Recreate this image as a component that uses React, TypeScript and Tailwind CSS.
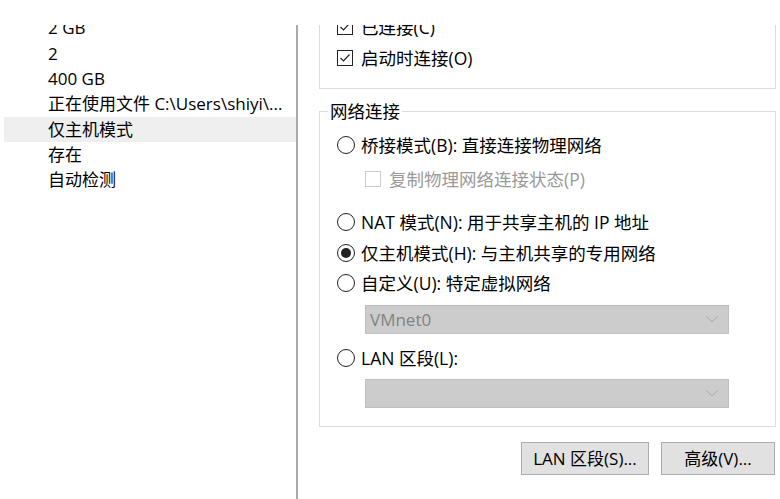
import React from "react"

const font = { fontFamily: '"Open Sans", "Noto Sans CJK SC", sans-serif' }

function Check({ checked, disabled }: { checked?: boolean; disabled?: boolean }) {
  return (
    <span
      className={`flex h-[16px] w-[16px] shrink-0 items-center justify-center border bg-white ${
        disabled ? "border-[#cccccc]" : "border-[#222222]"
      }`}
    >
      {checked && (
        <svg width="12" height="12" viewBox="0 0 12 12">
          <path d="M1.5 6 L4.5 9 L10.5 2.5" fill="none" stroke="#222" strokeWidth="1.2" />
        </svg>
      )}
    </span>
  )
}

function Radio({ checked }: { checked?: boolean }) {
  return (
    <span className="flex h-[18px] w-[18px] shrink-0 items-center justify-center rounded-full border border-[#222222] bg-white">
      {checked && <span className="h-[10px] w-[10px] rounded-full bg-[#222222]" />}
    </span>
  )
}

function Select({ value }: { value?: string }) {
  return (
    <div className="ml-[45px] mr-[46px] flex h-[29px] items-center justify-between border border-[#bfbfbf] bg-[#cccccc] pl-[4px] pr-[10px] text-[17px] text-[#838383]">
      <span>{value}</span>
      <svg width="12" height="7" viewBox="0 0 12 7">
        <path d="M0.5 0.5 L6 6 L11.5 0.5" fill="none" stroke="#a6a6a6" strokeWidth="1" />
      </svg>
    </div>
  )
}

const leftRows = ["2 GB", "2", "400 GB", "正在使用文件 C:\\Users\\shiyi\\...", "仅主机模式", "存在", "自动检测"]

export default function App() {
  return (
    <div className="h-[499px] w-[780px] bg-white pt-[25px] text-[17px] text-black" style={font}>
      <div className="flex h-full overflow-hidden">
        {/* left summary list */}
        <div className="w-[296px] shrink-0">
          <div className="-mt-[9.6px] pl-[4px]">
            {leftRows.map((r) => (
              <div
                key={r}
                className={`flex h-[25.3px] items-center whitespace-nowrap pl-[44px] ${
                  r === "仅主机模式" ? "bg-[#efefef]" : ""
                }`}
              >
                {r}
              </div>
            ))}
          </div>
        </div>

        <div className="w-[2px] shrink-0 bg-[#a9a9a9]" />

        {/* right settings */}
        <div className="flex-1 pl-[21px] pr-[4px] text-[17.5px]">
          <div className="-mt-[20px] border border-[#dcdcdc] pl-[17px] pt-[6px] pb-[15px]">
            <div className="flex h-[30px] items-center gap-[8px]">
              <Check checked />
              <span>已连接(C)</span>
            </div>
            <div className="mt-[1px] flex h-[30px] items-center gap-[8px]">
              <Check checked />
              <span>启动时连接(O)</span>
            </div>
          </div>

          <fieldset className="mt-[10px] border border-[#dcdcdc]">
            <legend className="ml-[8px] px-[2px] leading-[24px]">网络连接</legend>
            <div className="pt-[7px] pb-[18px]">
              <div className="flex h-[30px] items-center gap-[6px] pl-[17px]">
                <Radio />
                <span>桥接模式(B): 直接连接物理网络</span>
              </div>
              <div className="mt-[4px] flex h-[30px] items-center gap-[8px] pl-[45px] text-[#9a9a9a]">
                <Check disabled />
                <span>复制物理网络连接状态(P)</span>
              </div>
              <div className="mt-[13px] flex h-[30px] items-center gap-[6px] pl-[17px]">
                <Radio />
                <span>NAT 模式(N): 用于共享主机的 IP 地址</span>
              </div>
              <div className="mt-[1px] flex h-[30px] items-center gap-[6px] pl-[17px]">
                <Radio checked />
                <span>仅主机模式(H): 与主机共享的专用网络</span>
              </div>
              <div className="flex h-[30px] items-center gap-[6px] pl-[17px]">
                <Radio />
                <span>自定义(U): 特定虚拟网络</span>
              </div>
              <div className="mt-[7px]">
                <Select value="VMnet0" />
              </div>
              <div className="mt-[9px] flex h-[30px] items-center gap-[6px] pl-[17px]">
                <Radio />
                <span>LAN 区段(L):</span>
              </div>
              <div className="mt-[6px]">
                <Select />
              </div>
            </div>
          </fieldset>

          <div className="mt-[15px] flex justify-end gap-[12px] pr-[1px] text-[17px]">
            <button className="h-[33px] w-[128px] border border-[#adadad] bg-[#e1e1e1]">LAN 区段(S)...</button>
            <button className="h-[33px] w-[114px] border border-[#adadad] bg-[#e1e1e1]">高级(V)...</button>
          </div>
        </div>
      </div>
    </div>
  )
}
